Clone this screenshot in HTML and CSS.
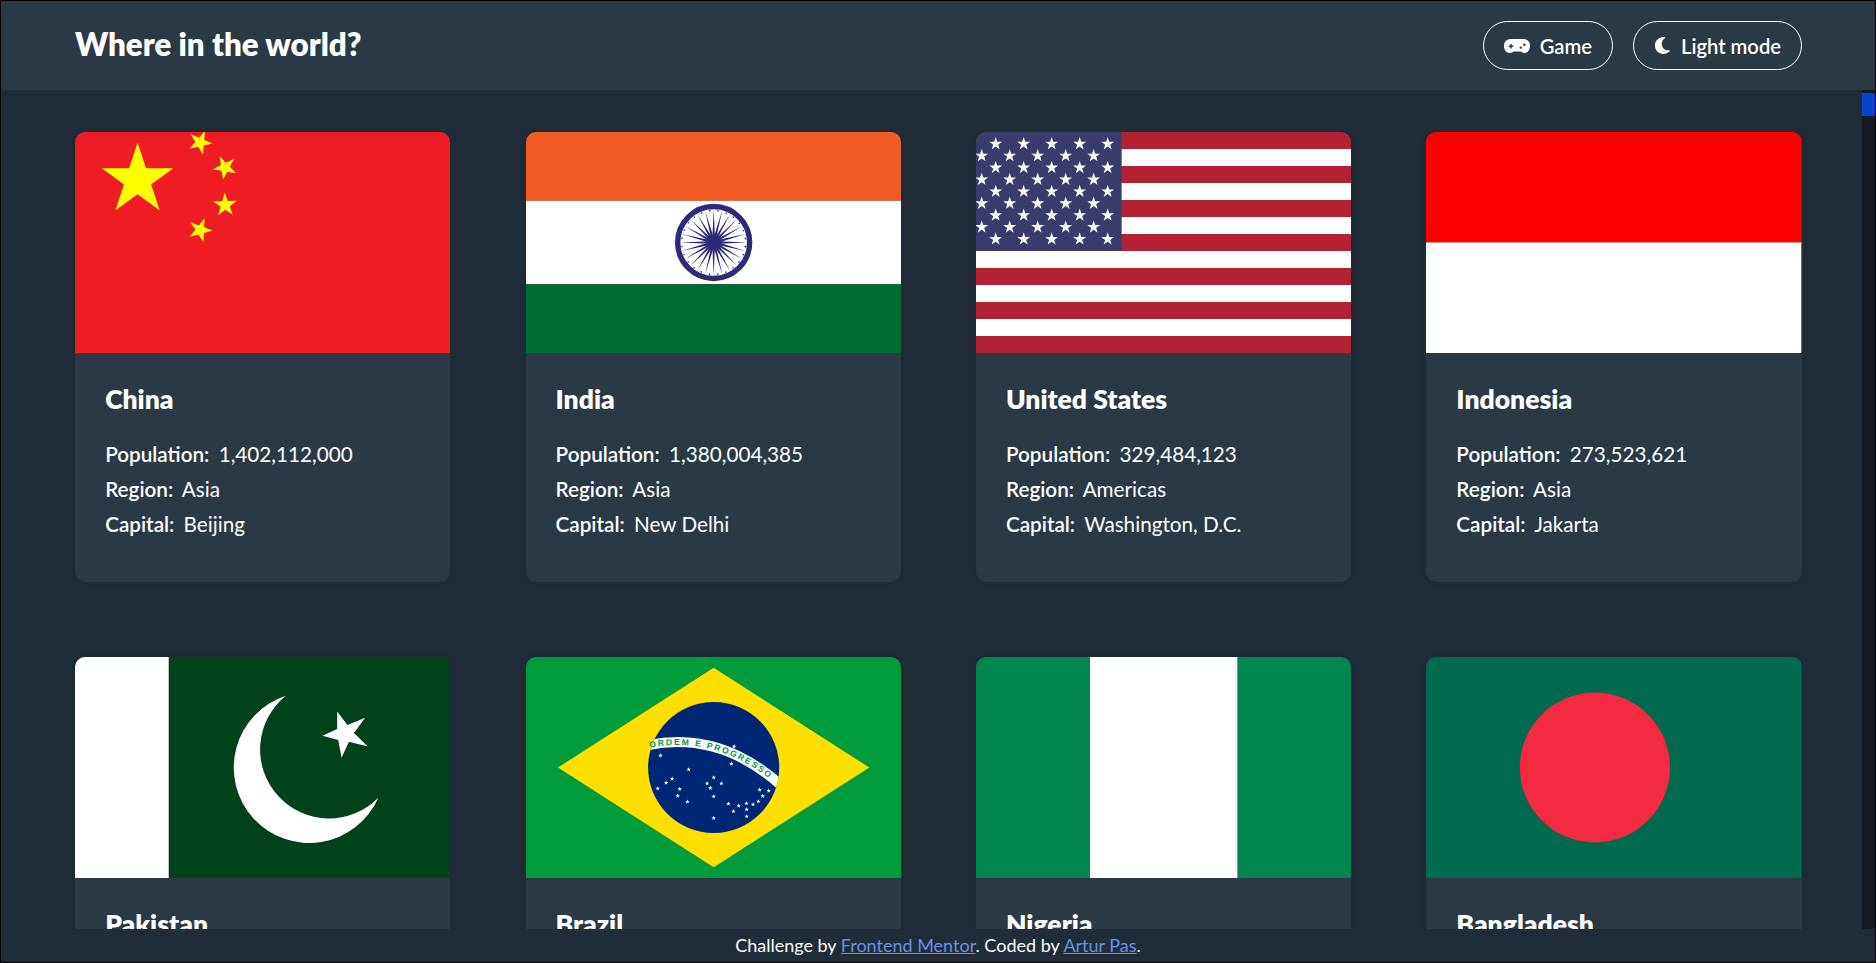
FILE: index.html
```html
<!DOCTYPE html>
<html lang="en">
<head>
<meta charset="utf-8">
<title>Where in the world?</title>
<link rel="stylesheet" href="styles.css">
</head>
<body>
<header class="topbar">
  <h1 class="brand">Where in the world?</h1>
  <div class="actions">
    <button class="pill" type="button">
      <svg class="pill-icon game-icon" viewBox="0 0 26 14"><path fill="#fff" d="M6.500 0h13a6.500 6.500 0 0 1 6.500 7c0 4.200-2.500 7-5.500 7-1.600 0-2.700-.5-3.700-1.400H9.700C8.700 13.500 7.100 14 5.500 14 2.500 14 0 11.200 0 7A6.500 6.500 0 0 1 6.500 0z"/><path fill="#2b3945" d="M6.200 5h1.500v1.500h1.500V8H7.700v1.500H6.200V8H4.700V6.500h1.500z"/><circle fill="#2b3945" cx="16.800" cy="8.600" r="1.200"/><circle fill="#2b3945" cx="20.400" cy="5.800" r="1.200"/></svg>
      Game
    </button>
    <button class="pill" type="button">
      <svg class="pill-icon moon-icon" viewBox="0 0 512 512"><path fill="#fff" d="M283.211 512c78.962 0 151.079-35.925 198.857-94.792 7.068-8.708-.639-21.430-11.562-19.350-124.203 23.654-238.262-71.576-238.262-196.954 0-72.222 38.662-138.635 101.498-174.394 9.686-5.512 7.250-20.197-3.756-22.230A258.156 258.156 0 0 0 283.211 0c-141.309 0-256 114.511-256 256 0 141.309 114.511 256 256 256z"/></svg>
      Light mode
    </button>
  </div>
</header>

<div class="middle">
  <main class="viewport">
    <div class="grid">

      <article class="card">
        <svg class="flag" viewBox="0 0 30 20" preserveAspectRatio="xMidYMid slice">
          <defs><polygon id="cn" fill="#ff0" points="0,-1 .2245,-.309 .951,-.309 .363,.118 .588,.809 0,.382 -.588,.809 -.363,.118 -.951,-.309 -.2245,-.309"/></defs>
          <rect width="30" height="20" fill="#ee1c25"/>
          <use href="#cn" transform="translate(5,5) scale(3)"/>
          <use href="#cn" transform="translate(10,2) rotate(23.036)"/>
          <use href="#cn" transform="translate(12,4) rotate(45.870)"/>
          <use href="#cn" transform="translate(12,7) rotate(69.945)"/>
          <use href="#cn" transform="translate(10,9) rotate(20.660)"/>
        </svg>
        <div class="info">
          <h2 class="name">China</h2>
          <p class="fact"><b>Population:</b> 1,402,112,000</p>
          <p class="fact"><b>Region:</b> Asia</p>
          <p class="fact"><b>Capital:</b> Beijing</p>
        </div>
      </article>

      <article class="card">
        <svg class="flag" viewBox="0 0 375.500 250" preserveAspectRatio="xMidYMid slice">
          <defs><polygon id="sp" fill="#2d2a78" points="-1.500,0 0,-33 1.500,0"/></defs>
          <rect width="375.500" height="83.300" fill="#f25c27"/>
          <rect y="83.300" width="375.500" height="83.400" fill="#fff"/>
          <rect y="166.700" width="375.500" height="83.300" fill="#006a35"/>
          <g transform="translate(187.750,125)">
            <circle r="36" fill="none" stroke="#2d2a78" stroke-width="5.400"/>
            <circle r="6.500" fill="#2d2a78"/>
            <circle r="32" fill="none" stroke="#2d2a78" stroke-width="1.400" stroke-dasharray="1.400 6.978" stroke-dashoffset="-3.500"/>
            <use href="#sp" transform="rotate(0)"/><use href="#sp" transform="rotate(15)"/><use href="#sp" transform="rotate(30)"/><use href="#sp" transform="rotate(45)"/><use href="#sp" transform="rotate(60)"/><use href="#sp" transform="rotate(75)"/><use href="#sp" transform="rotate(90)"/><use href="#sp" transform="rotate(105)"/><use href="#sp" transform="rotate(120)"/><use href="#sp" transform="rotate(135)"/><use href="#sp" transform="rotate(150)"/><use href="#sp" transform="rotate(165)"/><use href="#sp" transform="rotate(180)"/><use href="#sp" transform="rotate(195)"/><use href="#sp" transform="rotate(210)"/><use href="#sp" transform="rotate(225)"/><use href="#sp" transform="rotate(240)"/><use href="#sp" transform="rotate(255)"/><use href="#sp" transform="rotate(270)"/><use href="#sp" transform="rotate(285)"/><use href="#sp" transform="rotate(300)"/><use href="#sp" transform="rotate(315)"/><use href="#sp" transform="rotate(330)"/><use href="#sp" transform="rotate(345)"/>
          </g>
        </svg>
        <div class="info">
          <h2 class="name">India</h2>
          <p class="fact"><b>Population:</b> 1,380,004,385</p>
          <p class="fact"><b>Region:</b> Asia</p>
          <p class="fact"><b>Capital:</b> New Delhi</p>
        </div>
      </article>

      <article class="card">
        <svg class="flag" viewBox="0 0 1235 650" preserveAspectRatio="xMidYMid slice">
          <defs>
            <polygon id="us" fill="#fff" points="0,-20 4.490,-6.180 19.020,-6.180 7.260,2.360 11.760,16.180 0,7.640 -11.760,16.180 -7.260,2.360 -19.020,-6.180 -4.490,-6.180"/>
            <g id="us5"><use href="#us" x="82.330"/><use href="#us" x="164.670"/><use href="#us" x="247"/><use href="#us" x="329.330"/><use href="#us" x="411.670"/></g>
            <g id="us6"><use href="#us" x="41.170"/><use href="#us" x="123.500"/><use href="#us" x="205.830"/><use href="#us" x="288.170"/><use href="#us" x="370.500"/><use href="#us" x="452.830"/></g>
          </defs>
          <rect width="1235" height="650" fill="#b22234"/>
          <rect y="50" width="1235" height="50" fill="#fff"/>
          <rect y="150" width="1235" height="50" fill="#fff"/>
          <rect y="250" width="1235" height="50" fill="#fff"/>
          <rect y="350" width="1235" height="50" fill="#fff"/>
          <rect y="450" width="1235" height="50" fill="#fff"/>
          <rect y="550" width="1235" height="50" fill="#fff"/>
          <rect width="494" height="350" fill="#3c3b6e"/>
          <use href="#us6" y="35"/><use href="#us5" y="70"/><use href="#us6" y="105"/><use href="#us5" y="140"/><use href="#us6" y="175"/><use href="#us5" y="210"/><use href="#us6" y="245"/><use href="#us5" y="280"/><use href="#us6" y="315"/>
        </svg>
        <div class="info">
          <h2 class="name">United States</h2>
          <p class="fact"><b>Population:</b> 329,484,123</p>
          <p class="fact"><b>Region:</b> Americas</p>
          <p class="fact"><b>Capital:</b> Washington, D.C.</p>
        </div>
      </article>

      <article class="card">
        <svg class="flag" viewBox="0 0 3 2" preserveAspectRatio="xMidYMid slice">
          <rect width="3" height="1" fill="#f00"/>
          <rect y="1" width="3" height="1" fill="#fff"/>
        </svg>
        <div class="info">
          <h2 class="name">Indonesia</h2>
          <p class="fact"><b>Population:</b> 273,523,621</p>
          <p class="fact"><b>Region:</b> Asia</p>
          <p class="fact"><b>Capital:</b> Jakarta</p>
        </div>
      </article>

      <article class="card">
        <svg class="flag" viewBox="0 0 375.500 221.500" preserveAspectRatio="xMidYMid slice">
          <rect width="375.500" height="221.500" fill="#01411c"/>
          <rect width="93.750" height="221.500" fill="#fff"/>
          <path fill="#fff" d="M210.900 39A75.500 75.500 0 1 0 303.500 141A69 69 0 1 1 210.900 39z"/>
          <polygon fill="#fff" points="262.300,54.700 272.600,68.300 290.300,61 279.100,76.300 293,89.700 274.100,85.100 266.700,101 263.400,83.300 247.700,79 262.300,72.200"/>
        </svg>
        <div class="info">
          <h2 class="name">Pakistan</h2>
          <p class="fact"><b>Population:</b> 220,892,331</p>
          <p class="fact"><b>Region:</b> Asia</p>
          <p class="fact"><b>Capital:</b> Islamabad</p>
        </div>
      </article>

      <article class="card">
        <svg class="flag" viewBox="0 0 375.500 221.500" preserveAspectRatio="xMidYMid slice">
          <defs>
            <polygon id="br" fill="#fff" points="0,-2.400 .540,-.740 2.280,-.740 .870,.280 1.410,1.940 0,.920 -1.410,1.940 -.870,.280 -2.280,-.740 -.540,-.740"/>
            <clipPath id="br-clip"><circle cx="187.750" cy="110.750" r="65.600"/></clipPath>
            <path id="br-arc" d="M115 93Q195 73 262 138"/>
          </defs>
          <rect width="375.500" height="221.500" fill="#009b3a"/>
          <polygon fill="#fedf00" points="187.750,11 343.500,110.750 187.750,210.500 32,110.750"/>
          <circle cx="187.750" cy="110.750" r="65.600" fill="#002776"/>
          <path clip-path="url(#br-clip)" fill="none" stroke="#fff" stroke-width="10" d="M115 90Q195 70 262 135"/>
          <text class="motto"><textPath href="#br-arc" startOffset="9">ORDEM E PROGRESSO</textPath></text>
          <use href="#br" x="134.500" y="98.700"/><use href="#br" x="162.800" y="112.700"/><use href="#br" x="140.200" y="126"/><use href="#br" x="146.200" y="122"/><use href="#br" x="131.800" y="131.700"/><use href="#br" x="153.800" y="132.300"/><use href="#br" x="151.800" y="139"/><use href="#br" x="161.500" y="145"/><use href="#br" x="187.800" y="120.700"/><use href="#br" x="181.200" y="126.700"/><use href="#br" x="195.500" y="126.700"/><use href="#br" x="184.500" y="131.300"/><use href="#br" x="187.800" y="139.700"/><use href="#br" x="187.800" y="161.300"/><use href="#br" x="208.200" y="89.700"/><use href="#br" x="205.500" y="107"/><use href="#br" x="202.500" y="147"/><use href="#br" x="212.800" y="149"/><use href="#br" x="220.500" y="146.700"/><use href="#br" x="227.200" y="147.700"/><use href="#br" x="232.500" y="144.700"/><use href="#br" x="236.800" y="139.300"/><use href="#br" x="233.800" y="133"/><use href="#br" x="242.800" y="134"/><use href="#br" x="207.500" y="154.700"/><use href="#br" x="220.800" y="152.700"/><use href="#br" x="220.800" y="159.700"/>
        </svg>
        <div class="info">
          <h2 class="name">Brazil</h2>
          <p class="fact"><b>Population:</b> 212,559,417</p>
          <p class="fact"><b>Region:</b> Americas</p>
          <p class="fact"><b>Capital:</b> Brasília</p>
        </div>
      </article>

      <article class="card">
        <svg class="flag" viewBox="0 0 6 3" preserveAspectRatio="xMidYMid slice">
          <rect width="6" height="3" fill="#008751"/>
          <rect x="2" width="2" height="3" fill="#fff"/>
        </svg>
        <div class="info">
          <h2 class="name">Nigeria</h2>
          <p class="fact"><b>Population:</b> 206,139,587</p>
          <p class="fact"><b>Region:</b> Africa</p>
          <p class="fact"><b>Capital:</b> Abuja</p>
        </div>
      </article>

      <article class="card">
        <svg class="flag" viewBox="0 0 1000 600" preserveAspectRatio="xMidYMid slice">
          <rect width="1000" height="600" fill="#006a4e"/>
          <circle cx="450" cy="300" r="200" fill="#f42a41"/>
        </svg>
        <div class="info">
          <h2 class="name">Bangladesh</h2>
          <p class="fact"><b>Population:</b> 164,689,383</p>
          <p class="fact"><b>Region:</b> Asia</p>
          <p class="fact"><b>Capital:</b> Dhaka</p>
        </div>
      </article>

    </div>
  </main>
  <div class="scrolltrack"><div class="scrollthumb"></div></div>
</div>

<footer class="attribution">
  Challenge by <a href="#">Frontend Mentor</a>. Coded by <a href="#">Artur Pas</a>.
</footer>
</body>
</html>
```
FILE: styles.css
```css
* { box-sizing: border-box; }
html, body { height: 100%; margin: 0; }
body {
  display: flex;
  flex-direction: column;
  border: 1px solid #000;
  background: #202c37;
  color: #fff;
  font-family: "Lato", "Open Sans", sans-serif;
  overflow: hidden;
}
.topbar {
  flex: none;
  height: 89px;
  padding: 0 73px 0 74px;
  display: flex;
  align-items: center;
  justify-content: space-between;
  background: #2b3945;
  position: relative;
  z-index: 1;
  box-shadow: 0 2px 6px rgba(0,0,0,.06);
}
.brand { margin: 0 0 3px; font-size: 31.300px; font-weight: 800; }
.actions { display: flex; gap: 20px; }
.pill {
  height: 49px;
  padding: 0 20px;
  display: flex;
  align-items: center;
  gap: 10px;
  background: transparent;
  color: #fff;
  border: 1px solid #fff;
  border-radius: 25px;
  font: 600 20.200px "Lato", sans-serif;
}
.pill-icon { display: block; flex: none; }
.game-icon { width: 26px; height: 14px; }
.moon-icon { width: 17px; height: 17px; }
.middle { flex: 1; min-height: 0; display: flex; }
.viewport {
  flex: 1;
  min-width: 0;
  overflow: hidden;
  padding: 42px 60.350px 0 74.150px;
}
.grid {
  display: grid;
  grid-template-columns: repeat(4, 1fr);
  column-gap: 75.100px;
  row-gap: 75px;
}
.card {
  height: 450px;
  border-radius: 10px;
  overflow: hidden;
  background: #2b3945;
  box-shadow: 0 0 10px rgba(0,0,0,.1);
}
.flag { display: block; width: 100%; height: 221px; }
.motto { font: 700 8.600px "Liberation Sans", sans-serif; letter-spacing: 1.800px; fill: #009b3a; }
.info { padding: 30px 30px; }
.name { margin: 0 0 21px; font-size: 26.500px; line-height: 33px; font-weight: 800; }
.fact { margin: 0; font-size: 20.700px; line-height: 35px; }
.fact b { font-weight: 600; margin-right: 4px; }
.scrolltrack { flex: none; width: 13px; background: #131a22; padding-top: 3px; }
.scrollthumb { height: 23px; background: #0645cc; }
.attribution {
  flex: none;
  height: 33px;
  text-align: center;
  font-size: 18px;
  line-height: 33px;
  background: #202c37;
  position: relative;
  z-index: 1;
}
.attribution a { color: #6a8fe8; }
```
